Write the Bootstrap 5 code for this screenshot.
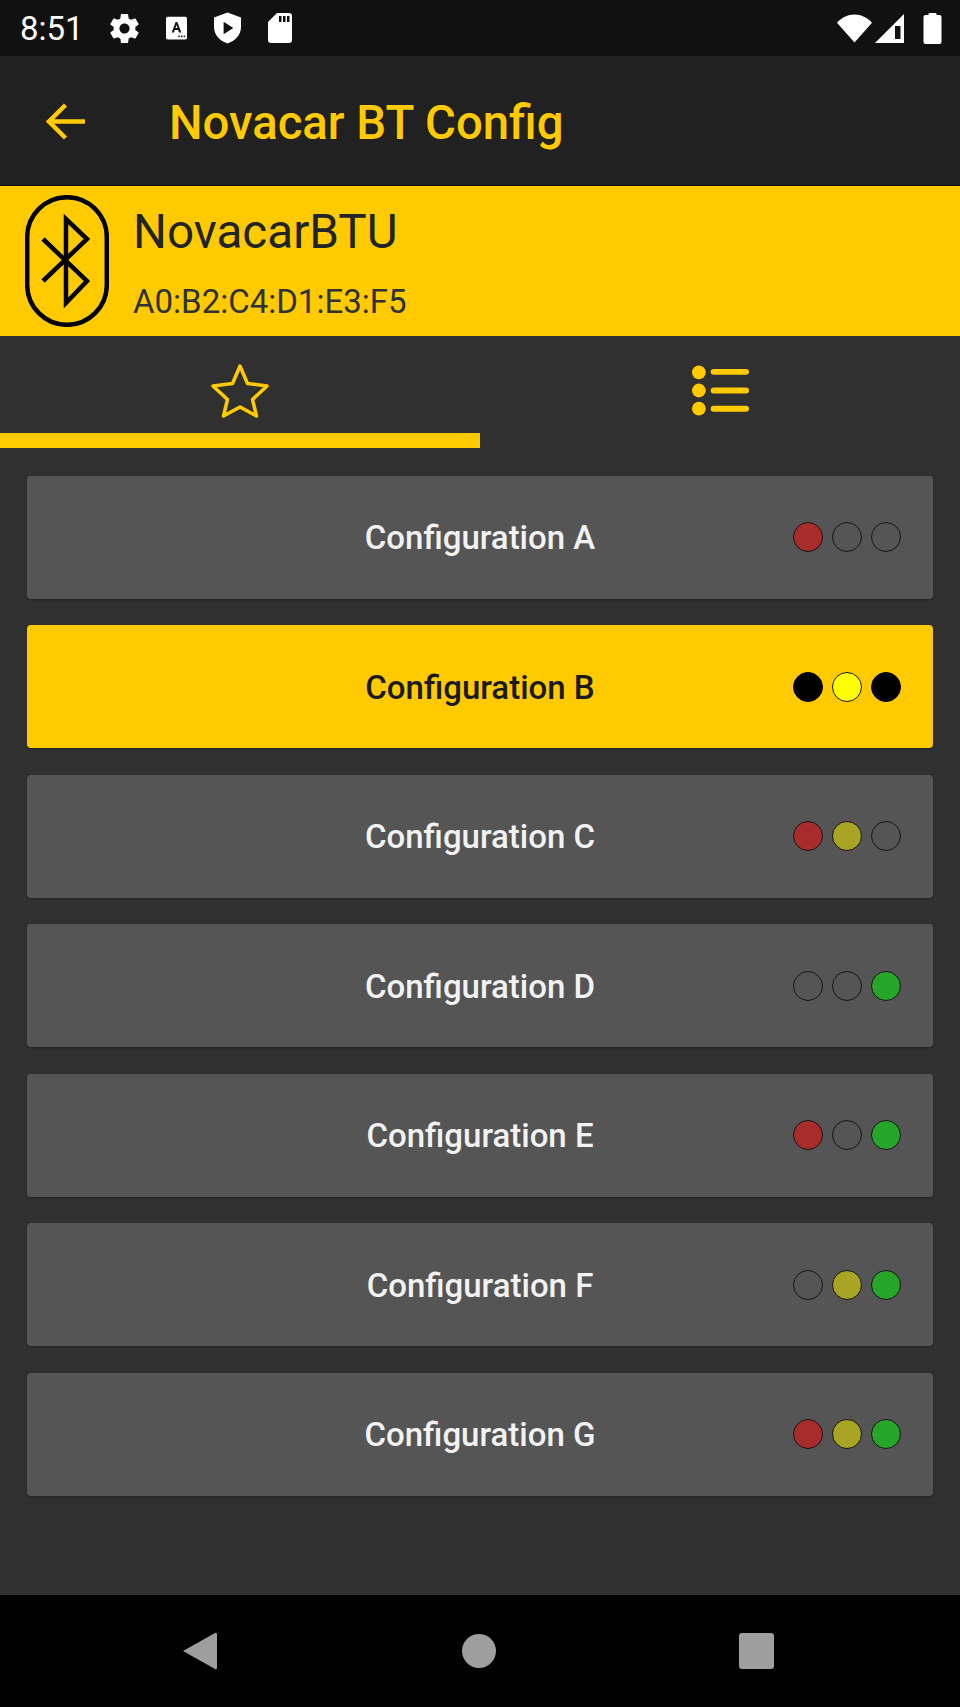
<!DOCTYPE html>
<html lang="en">
<head>
    <meta charset="UTF-8">
    <meta name="viewport" content="width=device-width, initial-scale=1.0">
    <title>Novacar BT Config</title>
    <link href="https://cdn.jsdelivr.net/npm/bootstrap@5.3.0/dist/css/bootstrap.min.css" rel="stylesheet">
    <style>
        html, body { height: 100%; }
        body {
            background-color: #303030;
            font-family: Roboto, "Liberation Sans", sans-serif;
        }
        .phone { height: 1707px; }
        .status-bar { height: 56px; background-color: #111; color: #fff; padding: 0 18px 0 20px; }
        .status-time { font-size: 33px; line-height: 1; width: 63px; }
        .status-left { gap: 27px; }
        .status-right { gap: 3px; }
        .battery-icon { margin-left: 16px; }
        .app-bar { height: 130px; background-color: #212121; color: #ffcb00; padding-left: 46px; box-shadow: inset 0 -1px 0 #111; }
        .app-title { font-size: 47.3px; font-weight: 500; margin: 5px 0 0 84px; line-height: 1; }
        .device-head { height: 150px; background-color: #ffcb00; color: #212529; padding-left: 25px; }
        .device-name { font-size: 47.6px; line-height: 1; margin-top: 23px; }
        .device-mac { font-size: 33px; line-height: 1; margin-top: 28px; color: #2f3338; }
        .device-text { margin-left: 24px; }
        .tab-row { height: 112px; }
        .tab-cell { width: 50%; height: 112px; padding-top: 12px; }
        .tab-on { border-bottom: 15px solid #ffcb00; }
        .tab-off { padding-bottom: 15px; }
        .conf-list { padding: 27.5px 27px 0; gap: 26.5px; }
        .conf-row {
            height: 123px;
            background-color: #555;
            color: #f2f2f2;
            border-radius: 4px;
            box-shadow: 0 1px 2px rgba(0, 0, 0, .3);
            font-size: 33px;
            font-weight: 500;
        }
        .conf-row.conf-on { background-color: #ffcb00; color: #1a1a1a; }
        .conf-label { padding-top: 2px; }
        .conf-leds { right: 32px; top: 46.5px; gap: 9px; }
        .led { width: 30px; height: 30px; border-radius: 50%; border: 1.5px solid #151515; }
        .led-red { background-color: #a82c2c; }
        .led-yellow { background-color: #a8a525; }
        .led-green { background-color: #27a52b; }
        .led-black { background-color: #000; border-color: #000; }
        .led-bright { background-color: #ff0; }
        .nav-strip { height: 112px; background-color: #000; }
        .nav-back { margin-left: 183px; }
        .nav-home { margin-left: 245px; }
        .nav-recent { margin-left: 243px; }
    </style>
</head>
<body>
<div class="phone d-flex flex-column">

    <!-- Status bar -->
    <div class="status-bar d-flex align-items-center justify-content-between flex-shrink-0">
        <div class="d-flex align-items-center status-left">
            <span class="status-time">8:51</span>
            <svg width="29" height="29" viewBox="2 2 20 20" fill="#fff"><path d="M19.43 12.98c.04-.32.07-.64.07-.98s-.03-.66-.07-.98l2.11-1.65c.19-.15.24-.42.12-.64l-2-3.46c-.12-.22-.39-.3-.61-.22l-2.49 1c-.52-.4-1.08-.73-1.69-.98l-.38-2.65C14.46 2.18 14.25 2 14 2h-4c-.25 0-.46.18-.49.42l-.38 2.65c-.61.25-1.17.59-1.69.98l-2.49-1c-.23-.09-.49 0-.61.22l-2 3.46c-.13.22-.07.49.12.64l2.11 1.65c-.04.32-.07.65-.07.98s.03.66.07.98l-2.11 1.65c-.19.15-.24.42-.12.64l2 3.46c.12.22.39.3.61.22l2.49-1c.52.4 1.08.73 1.69.98l.38 2.65c.03.24.24.42.49.42h4c.25 0 .46-.18.49-.42l.38-2.65c.61-.25 1.17-.59 1.69-.98l2.49 1c.23.09.49 0 .61-.22l2-3.46c.12-.22.07-.49-.12-.64l-2.11-1.65zM12 15.5c-1.93 0-3.5-1.57-3.5-3.5s1.57-3.5 3.5-3.5 3.5 1.57 3.5 3.5-1.57 3.5-3.5 3.5z"/></svg>
            <svg width="21" height="24" viewBox="0 0 24 26"><rect width="24" height="26" rx="2" fill="#fff"/><path d="M6.5 18 11 6h2l4.500 12h-2.600l-1-2.800H10L9 18zM10.800 13h2.400L12 9.500z" fill="#111"/><circle cx="15" cy="22.500" r="1" fill="#111"/><circle cx="18" cy="22.500" r="1" fill="#111"/><circle cx="21" cy="22.500" r="1" fill="#111"/></svg>
            <svg width="27" height="32" viewBox="0 0 28 32"><path d="M14 0 28 5v10c0 8-6 14.500-14 17C6 29.500 0 23 0 15V5z" fill="#fff"/><path d="M10 9.500 20 16 10 22.500z" fill="#111"/></svg>
            <svg width="24" height="30" viewBox="0 0 24 30"><path d="M9 0h12a3 3 0 0 1 3 3v24a3 3 0 0 1-3 3H3a3 3 0 0 1-3-3V9z" fill="#fff"/><path d="M11 3h2.500v6H11zM15 3h2.500v6H15zM19 3h2.500v6H19z" fill="#111"/></svg>
        </div>
        <div class="d-flex align-items-center status-right">
            <svg width="35" height="29" viewBox="0 0 36 29"><path d="M0 8.500C5 3 11 0 18 0s13 3 18 8.500L18 29z" fill="#fff"/></svg>
            <svg width="29" height="29" viewBox="0 0 29 29"><path d="M29 0v29H0z" fill="#fff"/><path d="M20 12h5.500v13H20z" fill="#111"/></svg>
            <svg class="battery-icon" width="19" height="31" viewBox="0 0 18 31"><path d="M5 2V1a1 1 0 0 1 1-1h6a1 1 0 0 1 1 1v1h3a2 2 0 0 1 2 2v25a2 2 0 0 1-2 2H2a2 2 0 0 1-2-2V4a2 2 0 0 1 2-2z" fill="#fff"/></svg>
        </div>
    </div>

    <!-- App bar -->
    <div class="app-bar d-flex align-items-center flex-shrink-0">
        <svg width="39" height="37" viewBox="0 0 39 37" fill="none" stroke="#ffcb00" stroke-width="4.500"><path d="M39 18.500H3M19.500 2 3 18.500 19.500 35"/></svg>
        <h1 class="app-title">Novacar BT Config</h1>
    </div>

    <!-- Device header -->
    <div class="device-head d-flex align-items-center flex-shrink-0">
        <svg width="84" height="132" viewBox="0 0 84 132" fill="none" stroke="#000" stroke-width="4.500">
            <rect x="2.200" y="2.200" width="79.600" height="127.600" rx="39.800"/>
            <path d="M18 44 62 86 41 108V24L62 44 18 86"/>
        </svg>
        <div class="device-text align-self-start">
            <div class="device-name">NovacarBTU</div>
            <div class="device-mac">A0:B2:C4:D1:E3:F5</div>
        </div>
    </div>

    <!-- Tabs -->
    <div class="tab-row d-flex flex-shrink-0">
        <div class="tab-cell tab-on d-flex align-items-center justify-content-center">
            <svg width="58" height="54" viewBox="0 0 58 54" fill="none" stroke="#ffcb00" stroke-width="3.500" stroke-linejoin="round"><path d="M29 2 36.500 19.500 56 22 41.500 35.500 45.500 52 29 43 12.500 52 16.500 35.500 2 22 21.500 19.500z"/></svg>
        </div>
        <div class="tab-cell tab-off d-flex align-items-center justify-content-center">
            <svg width="57" height="51" viewBox="0 0 58 51" fill="#ffcb00"><circle cx="7" cy="7" r="7"/><circle cx="7" cy="25.500" r="7"/><circle cx="7" cy="44" r="7"/><rect x="19" y="3.500" width="39" height="6" rx="3"/><rect x="19" y="22.500" width="39" height="6" rx="3"/><rect x="19" y="41" width="39" height="6" rx="3"/></svg>
        </div>
    </div>

    <!-- Configurations -->
    <div id="confList" class="conf-list d-flex flex-column flex-grow-1"></div>

    <!-- Navigation bar -->
    <div class="nav-strip d-flex align-items-center flex-shrink-0">
        <svg class="nav-back" width="34" height="38" viewBox="0 0 34 38"><path d="M32 1 0 19l32 18a1.500 1.500 0 0 0 2-1V2a1.500 1.500 0 0 0-2-1z" fill="#9e9e9e"/></svg>
        <svg class="nav-home" width="34" height="34" viewBox="0 0 34 34"><circle cx="17" cy="17" r="17" fill="#9e9e9e"/></svg>
        <svg class="nav-recent" width="35" height="36" viewBox="0 0 35 36"><rect width="35" height="36" rx="3" fill="#9e9e9e"/></svg>
    </div>
</div>

<script src="https://cdn.jsdelivr.net/npm/bootstrap@5.3.0/dist/js/bootstrap.bundle.min.js"></script>
<script>
// each row: name, red, yellow, green
const configs = [
    ['A', 1, 0, 0],
    ['B', 0, 1, 0],
    ['C', 1, 1, 0],
    ['D', 0, 0, 1],
    ['E', 1, 0, 1],
    ['F', 0, 1, 1],
    ['G', 1, 1, 1]
];
const ledColors = ['led-red', 'led-yellow', 'led-green'];
const list = document.getElementById('confList');

configs.forEach(function (c) {
    const active = c[0] === 'B';
    let leds = '';
    for (let i = 0; i < 3; i++) {
        let cls = c[i + 1] ? ledColors[i] : '';
        if (active) cls = c[i + 1] ? 'led-bright' : 'led-black';
        leds += '<span class="led ' + cls + '"></span>';
    }
    list.innerHTML += '<div class="conf-row position-relative d-flex align-items-center justify-content-center flex-shrink-0 ' + (active ? 'conf-on' : '') + '">' +
        '<span class="conf-label">Configuration ' + c[0] + '</span>' +
        '<div class="conf-leds position-absolute d-flex">' + leds + '</div></div>';
});
</script>
</body>
</html>
